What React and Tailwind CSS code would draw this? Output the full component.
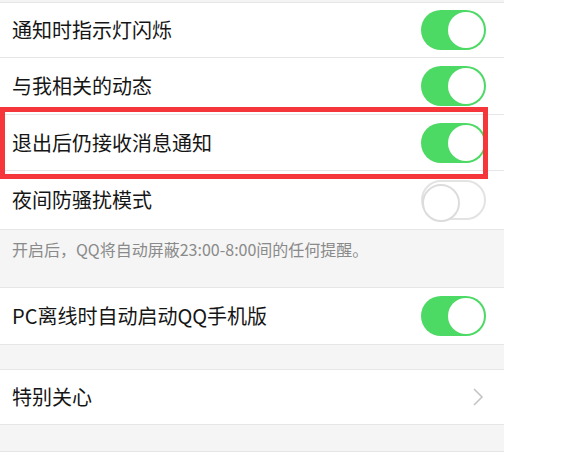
import React from 'react';

const Toggle = ({ on }) => (
    <div
        className={`relative w-[65px] h-[40px] rounded-full ${on ? 'bg-[#4cd964]' : 'bg-white border-2 border-[#e3e3e3]'}`}
    >
        <div
            className={`absolute top-[2px] w-[36px] h-[36px] rounded-full bg-white ${on ? 'right-[2px]' : '-left-[1px] -top-[1px] w-[38px] h-[38px] border-2 border-[#dcdcdc]'}`}
        />
    </div>
);

const Row = ({ label, on, height = 'h-[56px]', children }) => (
    <div className={`relative flex items-center justify-between ${height} pl-3 pr-[18px] bg-white border-b border-[#e6e6e6]`}>
        <span className="text-[20px] text-[#151515]">{label}</span>
        {on !== undefined && <Toggle on={on} />}
        {children}
    </div>
);

export default function App() {
    return (
        <div className="w-[572px] h-[467px] bg-white overflow-hidden" style={{ fontFamily: '"Noto Sans CJK SC", "Noto Sans", sans-serif' }}>
            <div className="w-[504px]">
                <div className="h-[3px] bg-[#f4f4f4] border-b border-[#e6e6e6]" />
                <Row label="通知时指示灯闪烁" on={true} height="h-[55px]" />
                <Row label="与我相关的动态" on={true} height="h-[57px]" />
                <Row label="退出后仍接收消息通知" on={true} height="h-[56px]">
                    <div className="absolute z-10 left-0 right-[16px] -top-[8px] -bottom-[9px] border-[5px] border-[#f5363a]" />
                </Row>
                <Row label="夜间防骚扰模式" on={false} height="h-[59px]" />
                <div className="h-[58px] bg-[#f5f5f5] border-b border-[#e6e6e6] pl-3 pt-[7px]">
                    <span className="text-[16px] text-[#8a8a8a]">开启后，QQ将自动屏蔽23:00-8:00间的任何提醒。</span>
                </div>
                <Row label="PC离线时自动启动QQ手机版" on={true} height="h-[57px]" />
                <div className="h-[25px] bg-[#f5f5f5] border-b border-[#e6e6e6]" />
                <Row label="特别关心" height="h-[55px]">
                    <svg width="12" height="20" viewBox="0 0 12 20" className="mr-[2px]">
                        <path d="M2 2 L10 10 L2 18" fill="none" stroke="#c4c4c4" strokeWidth="1.6" />
                    </svg>
                </Row>
                <div className="h-[27px] bg-[#f5f5f5] border-b border-[#e6e6e6]" />
                <div className="h-[20px] bg-white" />
            </div>
        </div>
    );
}
